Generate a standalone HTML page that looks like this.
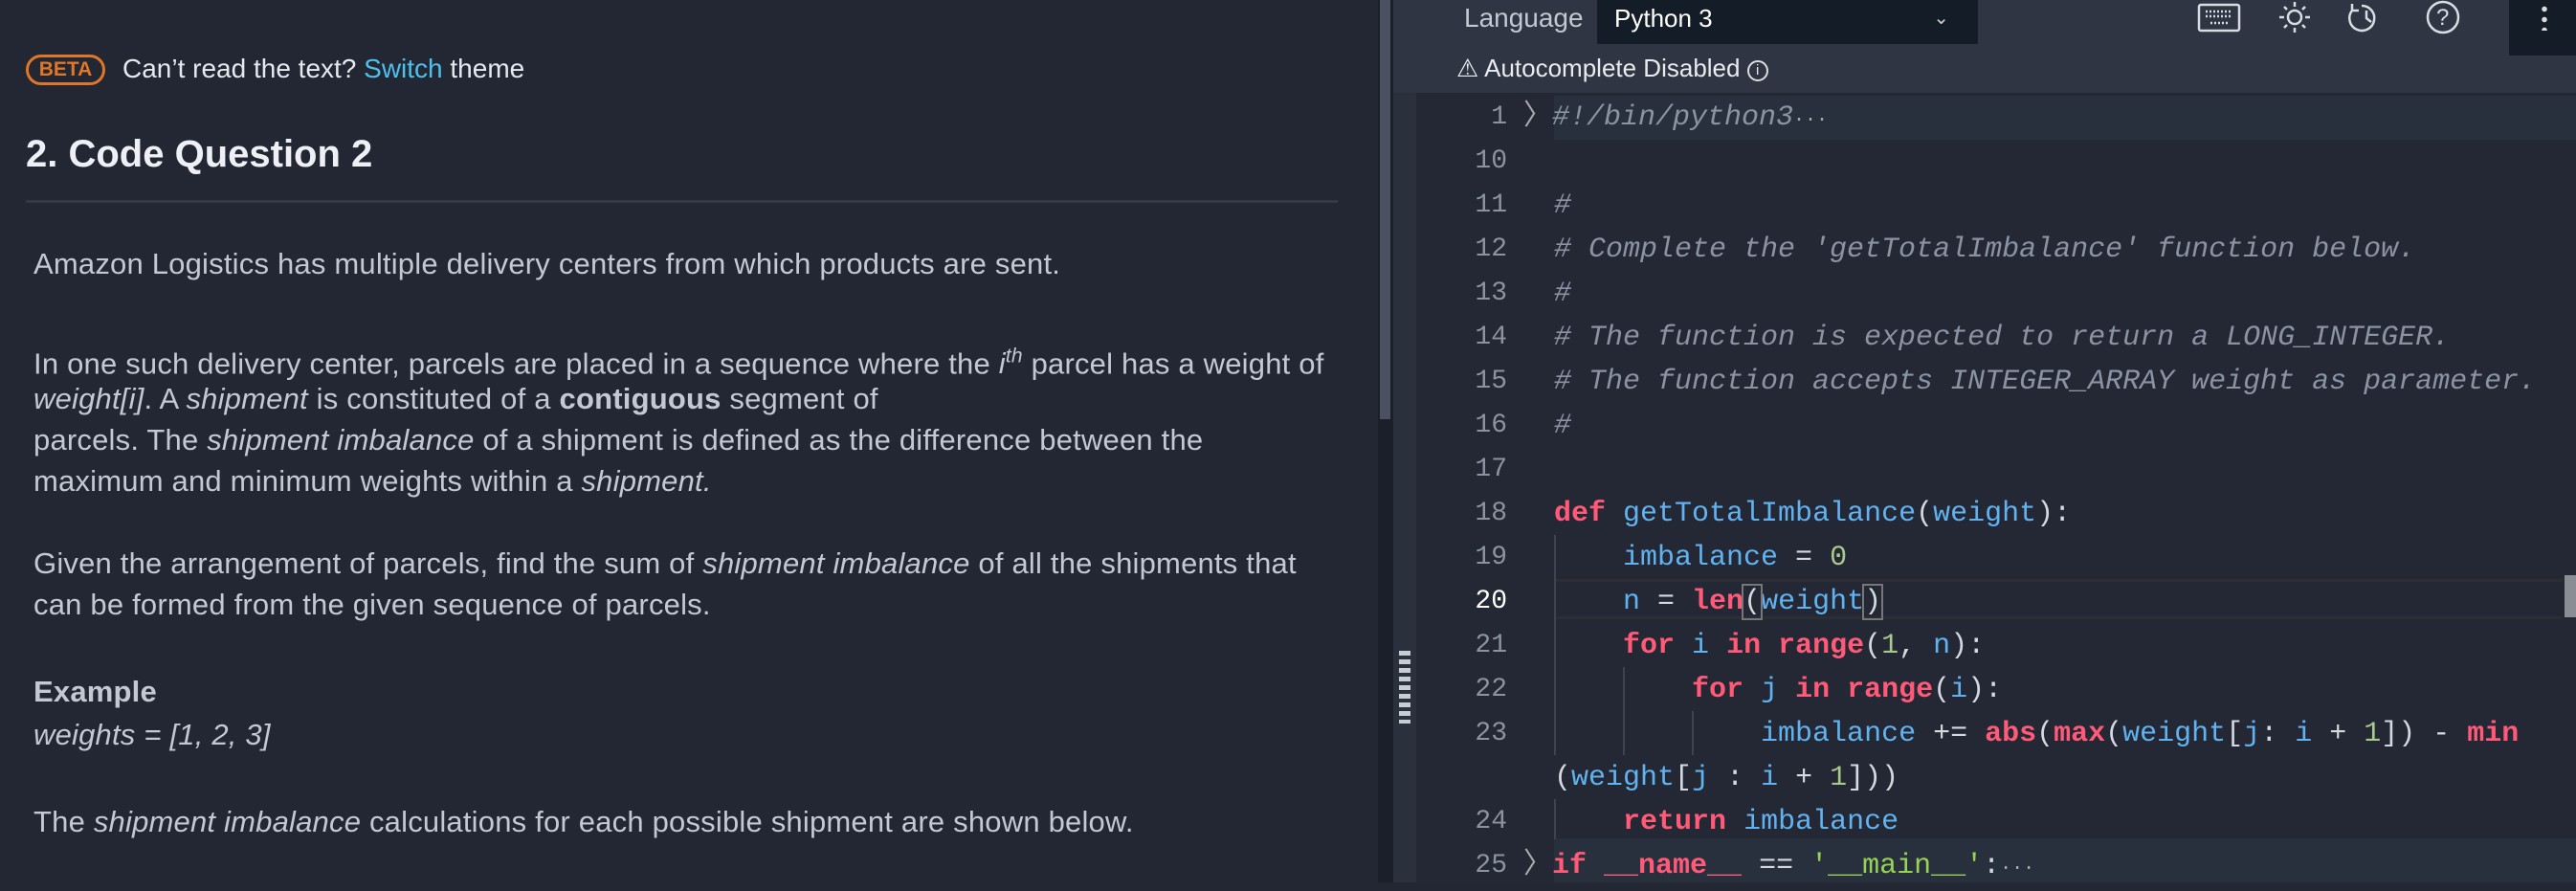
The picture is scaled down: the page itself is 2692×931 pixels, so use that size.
<!DOCTYPE html>
<html><head><meta charset="utf-8"><style>
*{margin:0;padding:0;box-sizing:border-box}
body{width:2692px;height:922px;overflow:hidden;background:#222733;font-family:"Liberation Sans",sans-serif;position:relative}
.l{position:absolute;left:35px;color:#c3c8d2;font-size:31px;letter-spacing:0.2px;white-space:nowrap;line-height:40px}
i{font-style:italic}
#hdr{position:absolute;left:1456px;top:0;width:1236px;height:97px;background:#2f3542}
#ed{position:absolute;left:1480px;top:97px;width:1212px;height:825px;background:#232834}
.c{position:absolute;left:1624px;font-family:"Liberation Mono",monospace;font-size:30px;line-height:46px;height:46px;white-space:pre;color:#d4d8df}
.n{position:absolute;left:1520px;width:55px;text-align:right;font-family:"Liberation Mono",monospace;font-size:28px;line-height:46px;color:#8b93a0}
.cm{color:#8b93a3;font-style:italic}
.k{color:#ff5a78;font-weight:bold}
.b{color:#62b2f0}
.g{color:#a8c98c}
.s{color:#96d255}
.guide{position:absolute;width:2px;background:#3d4350}
</style></head><body>
<div style="position:absolute;left:27px;top:57px;width:83px;height:32px;border:3px solid #e07628;border-radius:16px;color:#e07628;font-size:21px;font-weight:bold;text-align:center;line-height:26px">BETA</div>
<div class="l" style="top:52px;left:128px;color:#e6e9ef;font-size:28px;letter-spacing:0">Can’t read the text? <span style="color:#4ec0ec">Switch</span> theme</div>
<div class="l" style="top:138px;left:27px;font-size:40px;font-weight:bold;color:#eef0f5;line-height:46px;letter-spacing:0">2. Code Question 2</div>
<div style="position:absolute;left:27px;top:209px;width:1371px;height:3px;background:#333a47"></div>
<div class="l" style="top:256px">Amazon Logistics has multiple delivery centers from which products are sent.</div>
<div class="l" style="top:353px">In one such delivery center, parcels are placed in a sequence where the <i>i<sup style="font-size:21px">th</sup></i> parcel has a weight of</div>
<div class="l" style="top:397px"><i>weight[i]</i>. A <i>shipment</i> is constituted of a <b>contiguous</b> segment of</div>
<div class="l" style="top:440px">parcels. The <i>shipment imbalance</i> of a shipment is defined as the difference between the</div>
<div class="l" style="top:483px">maximum and minimum weights within a <i>shipment.</i></div>
<div class="l" style="top:569px">Given the arrangement of parcels, find the sum of <i>shipment imbalance</i> of all the shipments that</div>
<div class="l" style="top:612px">can be formed from the given sequence of parcels.</div>
<div class="l" style="top:703px;font-weight:bold">Example</div>
<div class="l" style="top:748px"><i>weights = [1, 2, 3]</i></div>
<div class="l" style="top:839px">The <i>shipment imbalance</i> calculations for each possible shipment are shown below.</div>
<div style="position:absolute;left:1440px;top:0;width:16px;height:922px;background:#1a1f29"></div>
<div style="position:absolute;left:1442px;top:0;width:11px;height:438px;background:#4a5160"></div>
<div style="position:absolute;left:1456px;top:97px;width:24px;height:825px;background:#2a303c"></div>
<div style="position:absolute;left:1462px;top:680px;width:12px;height:76px;background:repeating-linear-gradient(#c8ccd4 0 5px,transparent 5px 9px);border-left:4px solid transparent"></div>
<div id="hdr"></div>
<div style="position:absolute;left:1530px;top:0;font-size:28px;color:#c3c8d2;line-height:38px">Language</div>
<div style="position:absolute;left:1669px;top:0;width:398px;height:46px;background:#131c27;color:#fff;font-size:26px;line-height:38px;padding-left:18px">Python 3<span style="position:absolute;right:30px;top:0;font-size:20px;color:#ccc">&#8964;</span></div>
<div style="position:absolute;left:1522px;top:52px;font-size:26px;color:#e8ebf0;line-height:38px">⚠ Autocomplete Disabled <span style="display:inline-block;width:22px;height:22px;border:2px solid #ddd;border-radius:50%;font-size:15px;line-height:18px;text-align:center;vertical-align:2px">i</span></div>
<svg style="position:absolute;left:2290px;top:0" width="320" height="40" fill="none" stroke="#d8dce3" stroke-width="2.5">
<rect x="8" y="5" width="42" height="27" rx="2"/><path d="M15 12h28M15 17h28M20 24h18" stroke-dasharray="2 2"/>
<circle cx="108" cy="18" r="7"/><path d="M108 2v5M108 29v5M92 18h5M119 18h5M97 7l3 3M116 26l3 3M97 29l3-3M116 10l3-3"/>
<path d="M178 6a13 13 0 1 1-10 5M168 4v7h7M183 11v8l5 4"/>
<circle cx="263" cy="18" r="16"/><text x="256" y="26" fill="#d8dce3" stroke="none" font-size="24" font-family="Liberation Sans">?</text>
</svg>
<div style="position:absolute;left:2622px;top:0;width:70px;height:58px;background:#131c27"></div>
<div style="position:absolute;left:2656px;top:4px;width:6px;height:28px;background:radial-gradient(circle,#ddd 2.5px,transparent 3px) 0 0/6px 11px"></div>
<div id="ed"></div>
<div style="position:absolute;left:1624px;top:100px;width:1068px;height:46px;background:#29303d"></div>
<div style="position:absolute;left:1624px;top:876px;width:1068px;height:46px;background:#29303d"></div>
<div style="position:absolute;left:1624px;top:605px;width:1054px;height:42px;border-top:3px solid #2b2f35;border-bottom:3px solid #2b2f35"></div>
<div style="position:absolute;left:2680px;top:601px;width:12px;height:44px;background:#8a8d93"></div>
<div class="guide" style="left:1624px;top:559px;height:230px"></div>
<div class="guide" style="left:1624px;top:835px;height:42px"></div>
<div class="guide" style="left:1696px;top:697px;height:92px"></div>
<div class="guide" style="left:1768px;top:743px;height:46px"></div>
<div class="n" style="top:100px">1</div><div class="c" style="top:100px;left:1592px;color:#aaa">〉<span class="cm">#!/bin/python3</span><span style="font-size:20px">···</span></div>
<div class="n" style="top:146px">10</div>
<div class="n" style="top:192px">11</div><div class="c cm" style="top:192px">#</div>
<div class="n" style="top:238px">12</div><div class="c cm" style="top:238px"># Complete the 'getTotalImbalance' function below.</div>
<div class="n" style="top:284px">13</div><div class="c cm" style="top:284px">#</div>
<div class="n" style="top:330px">14</div><div class="c cm" style="top:330px"># The function is expected to return a LONG_INTEGER.</div>
<div class="n" style="top:376px">15</div><div class="c cm" style="top:376px"># The function accepts INTEGER_ARRAY weight as parameter.</div>
<div class="n" style="top:422px">16</div><div class="c cm" style="top:422px">#</div>
<div class="n" style="top:468px">17</div>
<div class="n" style="top:514px">18</div><div class="c" style="top:514px"><span class="k">def</span> <span class="b">getTotalImbalance</span>(<span class="b">weight</span>):</div>
<div class="n" style="top:560px">19</div><div class="c" style="top:560px">    <span class="b">imbalance</span> = <span class="g">0</span></div>
<div class="n" style="top:606px;color:#fff">20</div><div class="c" style="top:606px">    <span class="b">n</span> = <span class="k">len</span><span style="outline:2px solid #777">(</span><span class="b">weight</span><span style="outline:2px solid #777">)</span></div>
<div class="n" style="top:652px">21</div><div class="c" style="top:652px">    <span class="k">for</span> <span class="b">i</span> <span class="k">in</span> <span class="k">range</span>(<span class="g">1</span>, <span class="b">n</span>):</div>
<div class="n" style="top:698px">22</div><div class="c" style="top:698px">        <span class="k">for</span> <span class="b">j</span> <span class="k">in</span> <span class="k">range</span>(<span class="b">i</span>):</div>
<div class="n" style="top:744px">23</div><div class="c" style="top:744px">            <span class="b">imbalance</span> += <span class="k">abs</span>(<span class="k">max</span>(<span class="b">weight</span>[<span class="b">j</span>: <span class="b">i</span> + <span class="g">1</span>]) - <span class="k">min</span></div>
<div class="c" style="top:790px">(<span class="b">weight</span>[<span class="b">j</span> : <span class="b">i</span> + <span class="g">1</span>]))</div>
<div class="n" style="top:836px">24</div><div class="c" style="top:836px">    <span class="k">return</span> <span class="b">imbalance</span></div>
<div class="n" style="top:882px">25</div><div class="c" style="top:882px;left:1592px;color:#aaa">〉<span class="k">if</span> <span class="k">__name__</span> <span style="color:#d4d8df">==</span> <span class="s">'__main__'</span><span style="color:#d4d8df">:</span><span style="font-size:20px">···</span></div>
</body></html>
